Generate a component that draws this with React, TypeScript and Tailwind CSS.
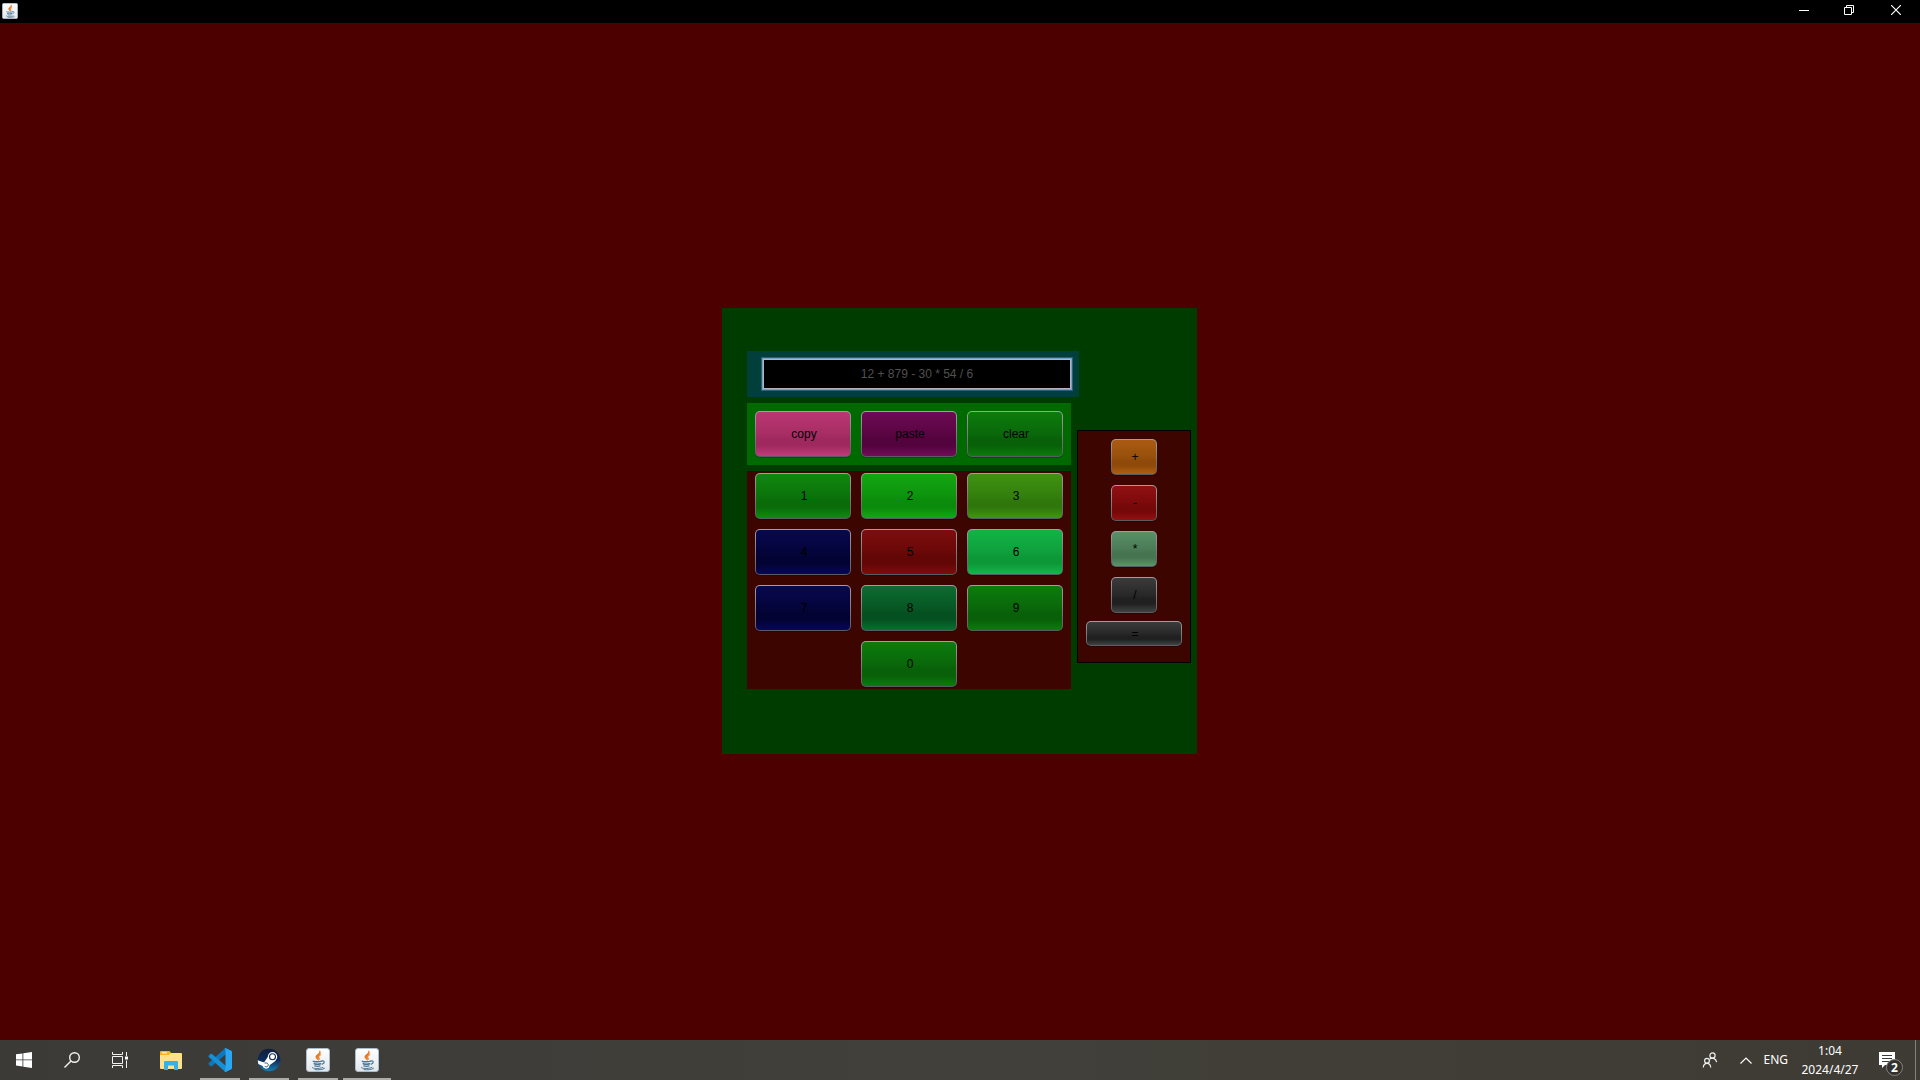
import { useState, type ReactNode } from "react";

const keyFace =
  "flex items-center justify-center rounded-[5px] border border-transparent pl-0.5 text-xs text-black shadow-[0_1px_0_rgba(0,0,0,0.22)] " +
  "[background:linear-gradient(var(--top),var(--mid)_50%,var(--low)_62%,var(--low)_76%,var(--end))_padding-box,linear-gradient(#a0a0a4,#7d7d83_50%,#595b63)_border-box]";

const tones = {
  pink: "[--top:#bb3673] [--mid:#a72e64] [--low:#9f295e] [--end:#c03c7b]",
  purple: "[--top:#6d0a54] [--mid:#5a0543] [--low:#53033d] [--end:#720c58]",
  forest: "[--top:#0c7c0c] [--mid:#0a680a] [--low:#086008] [--end:#0b7c0b]",
  green: "[--top:#0f870f] [--mid:#0b740b] [--low:#096c09] [--end:#108c10]",
  lime: "[--top:#12a712] [--mid:#0d930d] [--low:#0b8b0b] [--end:#12a912]",
  olive: "[--top:#3f9212] [--mid:#347f0d] [--low:#2f770b] [--end:#419712]",
  navy: "[--top:#08084f] [--mid:#04043b] [--low:#030333] [--end:#070755]",
  red: "[--top:#7d0d0d] [--mid:#6a0808] [--low:#620606] [--end:#800c0c]",
  mint: "[--top:#12b346] [--mid:#0fa03d] [--low:#0d9838] [--end:#13b748]",
  teal: "[--top:#0d6c31] [--mid:#075724] [--low:#055020] [--end:#0a7030]",
  orange: "[--top:#ab5b12] [--mid:#97500c] [--low:#8f4a0a] [--end:#b0600f]",
  crimson: "[--top:#901012] [--mid:#7d0a0b] [--low:#750809] [--end:#951011]",
  sage: "[--top:#599068] [--mid:#4b7c57] [--low:#467450] [--end:#5b966a]",
  gray: "[--top:#3b3b3b] [--mid:#282828] [--low:#202020] [--end:#424242]",
};

type Tone = keyof typeof tones;

function Key({ label, tone, size = "h-[46px] w-24", onPress }: { label: string; tone: Tone; size?: string; onPress: (label: string) => void }) {
  return (
    <button type="button" className={`${keyFace} ${tones[tone]} ${size}`} onClick={() => onPress(label)}>
      {label}
    </button>
  );
}

const editKeys: [string, Tone][] = [["copy", "pink"], ["paste", "purple"], ["clear", "forest"]];
const digitKeys: [string, Tone][] = [
  ["1", "green"], ["2", "lime"], ["3", "olive"],
  ["4", "navy"], ["5", "red"], ["6", "mint"],
  ["7", "navy"], ["8", "teal"], ["9", "forest"],
];
const operatorKeys: [string, Tone][] = [["+", "orange"], ["-", "crimson"], ["*", "sage"], ["/", "gray"]];

function Calculator() {
  const [text, setText] = useState("12 + 879 - 30 * 54 / 6");
  const press = (label: string) => {
    if (label === "clear") setText("");
    else if (/^\d$/.test(label)) setText((t) => t + label);
    else if (/^[-+*/]$/.test(label)) setText((t) => `${t} ${label} `);
  };
  return (
    <section aria-label="Calculator" className="bg-[#003c00] pt-[43px] pr-1.5 pb-[65px] pl-[25px]">
      <div className="mb-1.5 w-[332px] bg-[#003f3a] py-1.5 pr-1.5 pl-3.5">
        <div className="border border-[#2a6075] bg-[#72a3cd] p-px">
          <input
            aria-label="Expression"
            value={text}
            onChange={(e) => setText(e.target.value)}
            className="block h-[30px] w-full border border-[#b4b4ba] bg-black text-center text-xs text-[#505050] outline-none"
          />
        </div>
      </div>
      <div className="flex items-start gap-1.5">
        <div className="flex flex-col gap-1.5">
          <div className="flex gap-2.5 bg-[#006a00] p-2">
            {editKeys.map(([label, tone]) => (
              <Key key={label} label={label} tone={tone} onPress={press} />
            ))}
          </div>
          <div className="grid grid-cols-3 gap-2.5 bg-[#3c0500] px-2 py-0.5">
            {digitKeys.map(([label, tone]) => (
              <Key key={label} label={label} tone={tone} onPress={press} />
            ))}
            <div className="col-start-2">
              <Key label="0" tone="forest" onPress={press} />
            </div>
          </div>
        </div>
        <div className="mt-[27px] flex flex-col items-center gap-2 border border-black bg-[#3c0500] px-2 pt-2 pb-4">
          <div className="flex flex-col gap-2.5">
            {operatorKeys.map(([label, tone]) => (
              <Key key={label} label={label} tone={tone} size="h-9 w-[46px]" onPress={press} />
            ))}
          </div>
          <Key label="=" tone="gray" size="h-[25px] w-24" onPress={press} />
        </div>
      </div>
    </section>
  );
}

function JavaIcon({ className }: { className: string }) {
  return (
    <svg viewBox="0 0 24 24" className={className} aria-hidden="true">
      <defs>
        <linearGradient id="javaTile" x1="0" y1="0" x2="0" y2="1">
          <stop offset="0" stopColor="#ffffff" />
          <stop offset="1" stopColor="#e2e6ea" />
        </linearGradient>
      </defs>
      <rect x="0.5" y="0.5" width="23" height="23" rx="2.5" fill="url(#javaTile)" stroke="#a9bccb" />
      <path d="M13.600 2.800c1.300 2.700-3.800 3.800-3.700 6 0 1.300 1.200 2 2.100 3.200-.2-1.400-.7-2-.1-3.200C12.600 7.300 15.600 6 13.600 2.800z" fill="#e8731c" stroke="#e8731c" strokeWidth="0.700" />
      <path d="M15.200 6.600c-1.700.7-3.500 1.700-3.300 3.100.1.900 1.300 1.300.4 2.700 2-1 1.400-2.100.8-2.900-.6-.9.500-2 2.100-2.900z" fill="#ec8425" stroke="#ec8425" strokeWidth="0.500" />
      <g fill="none" stroke="#4a7799" strokeLinecap="round">
        <path d="M7.300 13.300c1.500.7 6 .7 8.300-.1" strokeWidth="1.400" />
        <path d="M8.200 15.700c1.800.6 4.600.6 6.400 0" strokeWidth="1.500" />
        <path d="M8.800 17.900c1.500.5 3.700.5 5.200 0" strokeWidth="1.300" />
        <path d="M16 13c2.500-.8 3.200 2 .2 3.200" strokeWidth="1.300" />
        <path d="M6.600 19.200c-2.200 1.400 6.500 2 10.400.2M9 21.600c3.500.4 7.500.1 9.500-1.200" strokeWidth="1" />
      </g>
    </svg>
  );
}

function WindowsIcon() {
  return (
    <svg viewBox="0 0 16 16" className="size-4" fill="#fff" aria-hidden="true">
      <path d="M0 2.300 6.500 1.400V7.500H0zM7.300 1.300 16 0V7.500H7.300zM0 8.300H6.500V14.500L0 13.600zM7.300 8.300H16V16L7.300 14.700z" />
    </svg>
  );
}

function SearchIcon() {
  return (
    <svg viewBox="0 0 16 16" className="size-4" fill="none" stroke="#f2f2f2" strokeWidth="1.400" aria-hidden="true">
      <circle cx="10.500" cy="5.500" r="4.800" />
      <path d="M7 9 .5 15.500" />
    </svg>
  );
}

function TaskViewIcon() {
  return (
    <svg viewBox="0 0 16 16" className="size-4" fill="none" stroke="#f2f2f2" aria-hidden="true">
      <path d="M.5 0V2.500H10.500V0M.5 16V13.500H10.500V16M.5 4.500H10.500V11.500H.5zM14.500 0V4M14.500 8.500V16" />
      <path d="M13 4.500h3v3h-3z" fill="#fff" stroke="none" />
    </svg>
  );
}

function ExplorerIcon() {
  return (
    <svg viewBox="0 0 22 19" className="h-[19px] w-[22px]" aria-hidden="true">
      <path d="M0 1a1 1 0 0 1 1-1H9.500L11 1.800V5H0z" fill="#f4b51e" />
      <path d="M2 1.200H7v1.200H2z" fill="#fff3cf" />
      <path d="M0 4H9L11 2H21a1 1 0 0 1 1 1V17a1 1 0 0 1-1 1H1a1 1 0 0 1-1-1z" fill="#ffe08b" />
      <path d="M4 11a1 1 0 0 1 1-1H17a1 1 0 0 1 1 1V19H14V14.500H8V19H4z" fill="#35b1e8" />
    </svg>
  );
}

function CodeIcon() {
  return (
    <svg viewBox="0 0 24 24" className="size-6" aria-hidden="true">
      <path d="M17.500 6.500 4 17.900c-.5.400-1 .4-1.500 0L.800 16.500c-.500-.5-.5-1.100 0-1.600L16.800.400 18 0 23 3z" fill="#0e78bd" />
      <path d="M17.500 17.500 4 6.100c-.5-.4-1-.4-1.500 0L.800 7.500c-.5.500-.5 1.100 0 1.600L16.800 23.600 18 24 23 21z" fill="#1590d8" />
      <path d="M17.300 0.100 23.200 2.700c.5.300.8.700.8 1.300V20c0 .600-.3 1-.8 1.300L17.300 23.900c-.6.200-1.100 0-1.500-.4.900.5 1.700 0 1.700-.9V1.400c0-.9-.8-1.400-1.700-.9.400-.400.9-.6 1.500-.4z" fill="#2aa7f2" />
    </svg>
  );
}

function SteamIcon() {
  return (
    <svg viewBox="0 0 24 24" className="size-6" aria-hidden="true">
      <defs>
        <linearGradient id="steamDisc" x1="0" y1="0" x2="0" y2="1">
          <stop offset="0" stopColor="#111d3a" />
          <stop offset="0.500" stopColor="#0d2b5a" />
          <stop offset="1" stopColor="#1580b4" />
        </linearGradient>
      </defs>
      <circle cx="12" cy="12" r="11.300" fill="url(#steamDisc)" />
      <path d="M.7 12.200 7 14.500l3.700-5.500 8.300 3.500-6.500 4.700c-.3 4.300-5.500 4.300-6.300 1L1.300 16z" fill="#fff" />
      <circle cx="15.500" cy="8.800" r="4.700" fill="#fff" />
      <circle cx="15.500" cy="8.800" r="3" fill="#fff" stroke="#122852" strokeWidth="1.100" />
      <circle cx="9" cy="17" r="3.300" fill="#fff" />
      <path d="M7.500 15c2.600-.6 4.400 1 3.600 2.600-.6 1.300-1.900 1.500-3.400.8" fill="none" stroke="#164a7d" strokeWidth="0.900" />
    </svg>
  );
}

function TaskButton({ label, children, running }: { label: string; children: ReactNode; running?: "open" | "wide" }) {
  return (
    <button type="button" aria-label={label} className="relative flex h-10 w-12 items-center justify-center">
      {children}
      {running && <span className={`absolute bottom-0 h-0.5 bg-[#aeabab] ${running === "wide" ? "inset-x-0" : "inset-x-1"}`} />}
    </button>
  );
}

function TitleBar() {
  return (
    <header className="flex h-[23px] items-start justify-between bg-black">
      <JavaIcon className="mt-[3px] ml-0.5 size-4" />
      <div className="flex h-5 text-white">
        <button type="button" aria-label="Minimize" className="flex w-[46px] items-center justify-center">
          <svg viewBox="0 0 10 10" className="size-2.5" stroke="currentColor" aria-hidden="true"><path d="M0 5.500H10" /></svg>
        </button>
        <button type="button" aria-label="Restore" className="flex w-11 items-center justify-center">
          <svg viewBox="0 0 10 10" className="size-2.5" fill="none" stroke="currentColor" aria-hidden="true"><path d="M.5 2.500H7.500V9.500H.5zM2.500 2.500V.5H9.500V7.500H7.500" /></svg>
        </button>
        <button type="button" aria-label="Close" className="flex w-[49px] items-center justify-center">
          <svg viewBox="0 0 10 10" className="size-2.5" stroke="currentColor" strokeWidth="1.200" aria-hidden="true"><path d="M0 0 10 10M10 0 0 10" /></svg>
        </button>
      </div>
    </header>
  );
}

function Taskbar() {
  return (
    <footer className="flex h-10 items-stretch justify-between bg-linear-to-r from-[#3b3a37] via-[#42403a] to-[#3e3b34] font-['Noto_Sans',sans-serif] text-xs text-white">
      <nav aria-label="Taskbar" className="flex">
        <TaskButton label="Start"><WindowsIcon /></TaskButton>
        <TaskButton label="Search"><SearchIcon /></TaskButton>
        <TaskButton label="Task view"><TaskViewIcon /></TaskButton>
        <div className="ml-[3px] flex gap-px">
          <TaskButton label="File Explorer"><ExplorerIcon /></TaskButton>
          <TaskButton label="Visual Studio Code" running="open"><CodeIcon /></TaskButton>
          <TaskButton label="Steam" running="open"><SteamIcon /></TaskButton>
          <TaskButton label="Java" running="open"><JavaIcon className="size-6" /></TaskButton>
          <TaskButton label="Java calculator" running="wide"><JavaIcon className="size-6" /></TaskButton>
        </div>
      </nav>
      <div className="flex">
        <button type="button" aria-label="People" className="flex w-10 items-center justify-center">
          <svg viewBox="0 0 16 16" className="size-4" fill="none" stroke="#f0f0f0" strokeWidth="1.200" aria-hidden="true">
            <circle cx="10.500" cy="3.500" r="2.600" />
            <path d="M7.800 7.200c2-2 6-1.200 6.900 3" />
            <circle cx="5" cy="8.800" r="2.400" />
            <path d="M1.300 15.500c.3-5.500 7.100-5.500 7.400 0" />
          </svg>
        </button>
        <button type="button" aria-label="Show hidden icons" className="flex w-8 items-center justify-center">
          <svg viewBox="0 0 12 7" className="h-[7px] w-3" fill="none" stroke="#fff" strokeWidth="1.200" aria-hidden="true"><path d="M.5 6.500 6 1 11.500 6.500" /></svg>
        </button>
        <button type="button" className="flex w-[34px] items-center justify-end pr-2">ENG</button>
        <button type="button" className="flex w-[68px] flex-col items-center justify-center leading-[19px]">
          <time>1:04</time>
          <time>2024/4/27</time>
        </button>
        <button type="button" aria-label="Notifications" className="relative flex w-[51px] items-center justify-center pr-1.5">
          <svg viewBox="0 0 16 16" className="size-4" aria-hidden="true">
            <path d="M0 0H16V13H6L3 16V13H0z" fill="#fff" />
            <path d="M3 3.500H13M3 6.500H13M3 9.500H13" stroke="#3e3b34" />
          </svg>
          <span className="absolute top-[19px] left-[22px] flex size-[17px] items-center justify-center rounded-full border border-[#85837f] bg-[#33312e] text-xs font-bold">2</span>
        </button>
        <button type="button" aria-label="Show desktop" className="w-[5px] border-l border-[#85827c]" />
      </div>
    </footer>
  );
}

export default function App() {
  return (
    <div className="flex min-h-screen flex-col bg-[#4d0000] font-['Liberation_Sans',Arial,sans-serif]">
      <TitleBar />
      <main className="flex flex-1 items-center justify-center pr-px pb-px">
        <Calculator />
      </main>
      <Taskbar />
    </div>
  );
}
